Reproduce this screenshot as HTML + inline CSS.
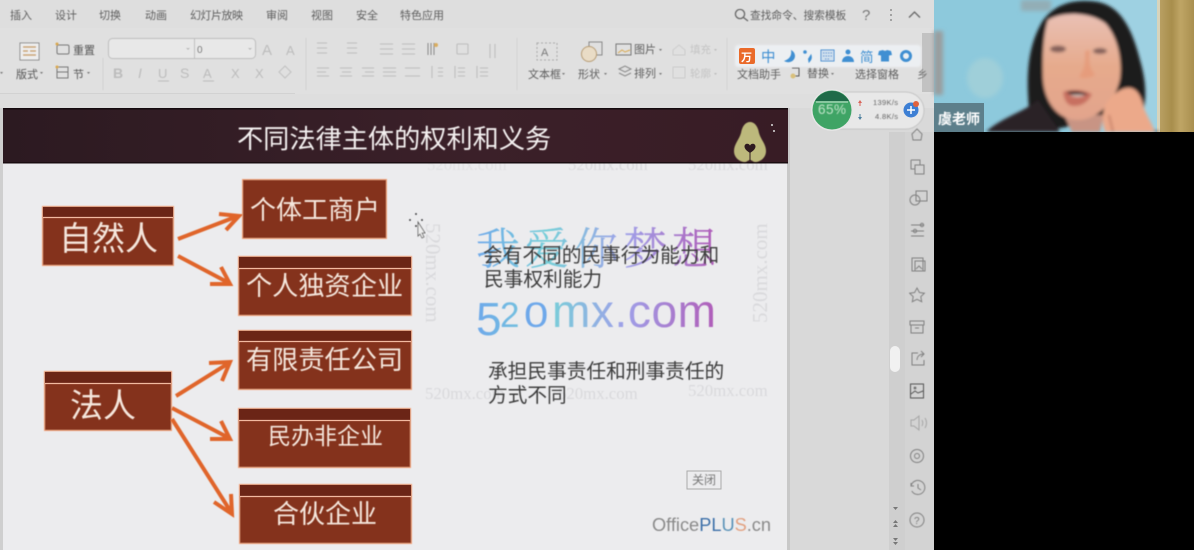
<!DOCTYPE html>
<html lang="zh"><head><meta charset="utf-8"><title>不同法律主体的权利和义务</title>
<style>
html,body{margin:0;padding:0;background:#000;width:1194px;height:550px;overflow:hidden}
svg{display:block}
text{font-family:"Liberation Sans","Noto Sans CJK SC",sans-serif}
.sf{font-family:"Liberation Serif",serif}
</style></head><body>
<svg width="1194" height="550" viewBox="0 0 1194 550" xmlns="http://www.w3.org/2000/svg">
<defs>
<filter id="b3" x="-5%" y="-5%" width="110%" height="110%"><feGaussianBlur stdDeviation="0.45"/></filter>
<filter id="b6" x="-5%" y="-5%" width="110%" height="110%"><feGaussianBlur stdDeviation="0.6"/></filter>
<filter id="b20" x="-20%" y="-20%" width="140%" height="140%"><feGaussianBlur stdDeviation="2"/></filter>
<filter id="b10" x="-20%" y="-20%" width="140%" height="140%"><feGaussianBlur stdDeviation="1"/></filter>
<filter id="b15" x="-10%" y="-10%" width="120%" height="120%"><feGaussianBlur stdDeviation="1.6"/></filter>
<linearGradient id="wm" x1="476" x2="716" y1="0" y2="0" gradientUnits="userSpaceOnUse"><stop offset="0" stop-color="#6ea8ea"/><stop offset=".3" stop-color="#76cfd8"/><stop offset=".62" stop-color="#9fa0e8"/><stop offset="1" stop-color="#b05db8"/></linearGradient>
<linearGradient id="hd" x1="0" x2="1" y1="0" y2="0"><stop offset="0" stop-color="#2c1a21"/><stop offset=".6" stop-color="#3b2029"/><stop offset="1" stop-color="#381c25"/></linearGradient>
<linearGradient id="cur" x1="0" x2="1" y1="0" y2="0"><stop offset="0" stop-color="#b89f62"/><stop offset=".35" stop-color="#a88e4c"/><stop offset=".6" stop-color="#bfa565"/><stop offset="1" stop-color="#a98f4f"/></linearGradient>
<linearGradient id="face" x1="0" x2="0" y1="0" y2="1"><stop offset="0" stop-color="#e9c0b4"/><stop offset=".5" stop-color="#e6aa8c"/><stop offset="1" stop-color="#e2a48c"/></linearGradient>
</defs>

<!-- app background -->
<rect width="1194" height="550" fill="#000"/>
<rect width="934" height="550" fill="#d9d9d9"/>
<rect width="934" height="108" fill="#dedede"/>
<rect y="28" width="934" height="66" fill="#e0e0e0"/>
<rect x="889" y="132" width="16" height="418" fill="#cfcfcf"/>
<rect x="905" y="132" width="29" height="418" fill="#d3d3d3"/>
<rect x="922" y="33" width="12" height="59" fill="#c2c2c2"/>
<rect x="0" y="93" width="295" height="1" fill="#d2d2d2"/>

<!-- tabs -->
<g font-size="11" fill="#5e5e5e" filter="url(#b6)">
<text x="10" y="19">插入</text><text x="55" y="19">设计</text><text x="99" y="19">切换</text><text x="145" y="19">动画</text><text x="190" y="19" textLength="53">幻灯片放映</text><text x="266" y="19">审阅</text><text x="311" y="19">视图</text><text x="356" y="19">安全</text><text x="400" y="19">特色应用</text>
<text x="750" y="19" font-size="10.7">查找命令、搜索模板</text>
<text x="862" y="20" font-size="15" fill="#777">?</text>
</g>
<g fill="none" stroke="#666" stroke-width="1.3" filter="url(#b3)">
<circle cx="740" cy="14" r="4.6"/><path d="M743.5 17.5L748 21"/>
<path d="M909 17.5L914.5 12L920 17.5"/>
</g>
<g fill="#777"><circle cx="891" cy="10" r=".9"/><circle cx="891" cy="15" r=".9"/><circle cx="891" cy="20" r=".9"/></g>

<!-- ribbon left -->
<g filter="url(#b6)">
<rect x="20" y="43" width="19" height="17" fill="#eee" stroke="#8b8b8b"/>
<path d="M23 47h13M23 51h5M30 51h6M23 55h13" stroke="#c9a066" stroke-width="1.5"/>
<rect x="57" y="45" width="12" height="9" rx="1.5" fill="none" stroke="#777"/><circle cx="57" cy="44" r="1.5" fill="#d9a84e"/>
<rect x="57" y="67" width="11" height="11" fill="none" stroke="#777"/><path d="M57 72h11" stroke="#777"/><circle cx="57" cy="67" r="1.5" fill="#d9a84e"/>
<g font-size="11" fill="#555"><text x="73" y="54">重置</text><text x="16" y="78">版式</text><text x="73" y="78">节</text></g>
<g fill="#777"><path d="M40 72l3 0-1.5 2zM87 72l3 0-1.5 2zM0 72l3 0-1.5 2z"/></g>
<rect x="108.500" y="38.500" width="147" height="20" rx="4" fill="#e8e8e8" stroke="#bdbdbd"/>
<path d="M194.500 39v19" stroke="#bdbdbd"/>
<text x="197" y="53" font-size="10" fill="#666">0</text>
<g fill="#b7b7b7"><path d="M186 48l4 0-2 2zM248 48l4 0-2 2z"/></g>
<g font-family="Liberation Sans" fill="#bcbcbc"><text x="262" y="55" font-size="15">A</text><text x="286" y="55" font-size="13">A</text>
<text x="113" y="78" font-size="14" font-weight="bold">B</text><text x="138" y="78" font-size="14" font-style="italic">I</text><text x="158" y="78" font-size="13">U</text><text x="180" y="78" font-size="14">S</text><text x="203" y="78" font-size="13">A</text><text x="231" y="78" font-size="13">X</text><text x="255" y="78" font-size="13">X</text></g>
<path d="M158 81h11M203 81h11" stroke="#bbb"/>
<path d="M279 72l6-6 6 6-6 6z" fill="none" stroke="#c0c0c0"/>
<path d="M103 58v32M306 38v52" stroke="#d0d0d0"/>
<g stroke="#bdbdbd" stroke-width="1.1" fill="none">
<path d="M317 43h10M317 48h10M317 53h10M347 43h10M347 48h10M347 53h10M380 44h13M380 49h13M380 54h13M402 44h13M402 49h13M402 54h13M457 44h11M457 54h11M457 44v10M468 44v10M490 44v14M495 44v14"/>
<path d="M317 68h12M317 72h9M317 76h12M340 68h12M342 72h9M340 76h12M362 68h12M365 72h9M362 76h12M383 68h13M383 72h13M383 76h13M405 68h15M405 76h15M432 66v12M438 68h5M438 72h5M438 76h5M455 66v12M458 68h7M458 72h7M458 76h7M477 66v12M480 68h8M480 72h8M480 76h8"/>
</g>
<path d="M428 43v12M431 43v12M434 43v12" stroke="#888" fill="none"/><circle cx="436" cy="45" r="2" fill="#d9ad60"/>
</g>

<!-- ribbon right -->
<g filter="url(#b6)">
<path d="M517 38v52M727 38v52" stroke="#d2d2d2"/>
<rect x="537" y="43" width="20" height="17" fill="none" stroke="#aaa" stroke-dasharray="2 2"/>
<text x="541" y="56" font-family="Liberation Sans" font-size="11" fill="#777">A</text>
<rect x="589" y="42" width="13" height="13" fill="none" stroke="#888"/><circle cx="589" cy="54" r="7.500" fill="#e9dcc6" stroke="#b69a6e"/>
<rect x="616" y="44" width="15" height="11" fill="none" stroke="#777"/><path d="M618 53l4-3 3 2 5-2" stroke="#d9a84e" fill="none"/>
<g fill="none" stroke="#888"><path d="M619 69l6-3 6 3-6 3zM619 73l6 3 6-3"/></g>
<g fill="none" stroke="#ccc"><path d="M673 50l6-5 6 5v5h-12z"/><rect x="673" y="67" width="12" height="11"/></g>
<g font-size="11" fill="#5f5f5f"><text x="528" y="78">文本框</text><text x="578" y="78">形状</text><text x="634" y="53">图片</text><text x="634" y="77">排列</text><text x="737" y="78">文档助手</text><text x="807" y="77">替换</text><text x="855" y="78">选择窗格</text></g>
<g font-size="10.500" fill="#c4c4c4"><text x="690" y="53">填充</text><text x="690" y="77">轮廓</text></g>
<g fill="#777"><path d="M562 73l3 0-1.500 2zM604 73l3 0-1.500 2zM659 49l3 0-1.500 2zM659 73l3 0-1.500 2zM831 73l3 0-1.500 2z"/></g>
<g fill="#bbb"><path d="M714 49l3 0-1.500 2zM714 73l3 0-1.500 2z"/></g>
<path d="M792 68h7v8h-4" fill="none" stroke="#555"/><circle cx="793" cy="76" r="2.500" fill="#d9c07a"/>
<text x="917" y="78" font-size="11" fill="#777">乡</text>
</g>

<!-- slide -->
<rect x="0" y="108" width="3" height="442" fill="#cfcfcf"/>
<rect x="3" y="163" width="784" height="387" fill="#ececee"/>
<rect x="787" y="108" width="3" height="442" fill="#c8c8c8"/>

<!-- watermarks (under header) -->
<g font-size="16.800" fill="#d9d9dc" filter="url(#b6)">
<text class="sf" x="427" y="170" fill="#e1e1e3">520mx.com</text>
<text class="sf" x="568" y="170">520mx.com</text>
<text class="sf" x="688" y="170">520mx.com</text>
<text class="sf" x="425" y="399">520mx.com</text>
<text class="sf" x="558" y="399">520mx.com</text>
<text class="sf" x="688" y="396">520mx.com</text>
<text class="sf" transform="translate(426,223) rotate(90)" font-size="21">520mx.com</text>
<text class="sf" transform="translate(767,323) rotate(-90)" font-size="21">520mx.com</text>
</g>

<rect x="3" y="108" width="785" height="55" fill="url(#hd)"/>
<rect x="3" y="108" width="785" height="1.500" fill="#140a0e"/>
<rect x="3" y="162" width="785" height="1.500" fill="#1a0d11"/>
<text x="237" y="148" font-size="26.200" fill="#f3efef" filter="url(#b3)">不同法律主体的权利和义务</text>
<!-- avocado -->
<path d="M750 122c5 0 8 5 9 11 2 7 7 11 7 18 0 7-6 11-11 11-2 0-3-2-5-2s-3 2-5 2c-5 0-11-4-11-11 0-7 5-11 7-18 1-6 4-11 9-11z" fill="#bdb97c" filter="url(#b3)"/>
<path d="M750 153c-3-2-5.500-4-5.500-6.500 0-1.800 1.300-2.800 2.800-2.800 1.300 0 2.200.8 2.700 1.800.5-1 1.400-1.800 2.700-1.800 1.500 0 2.800 1 2.800 2.800 0 2.500-2.500 4.500-5.500 6.500z" fill="#2e1a20"/>
<path d="M750 152v9" stroke="#2e1a20"/>
<g fill="#ddd"><circle cx="772" cy="125" r="1"/><circle cx="774" cy="131" r="1"/></g>

<!-- boxes -->
<g fill="#84301b" stroke="#f1a077" stroke-width="1" filter="url(#b3)">
<rect x="42.500" y="206.500" width="131" height="59"/>
<rect x="242.500" y="179.500" width="144" height="59"/>
<rect x="238.500" y="256.500" width="173" height="59"/>
<rect x="238.500" y="330.500" width="173" height="59"/>
<rect x="44.500" y="371.500" width="127" height="59"/>
<rect x="238.500" y="408.500" width="172" height="59"/>
<rect x="239.500" y="484.500" width="172" height="59"/>
</g>
<g fill="#6b2516">
<rect x="43" y="207" width="130" height="10"/><rect x="239" y="257" width="172" height="11"/><rect x="239" y="331" width="172" height="10"/><rect x="45" y="372" width="126" height="11"/><rect x="239" y="409" width="171" height="11"/><rect x="240" y="485" width="171" height="11"/>
</g>
<g stroke="#f2b9a0" stroke-width="1.300">
<path d="M43 217.500h130M239 268.500h172M239 341.500h172M45 383.500h126M239 420.500h171M240 496.500h171"/>
</g>
<g fill="#f5e6dc" filter="url(#b3)">
<text x="59" y="250" font-size="33">自然人</text>
<text x="250" y="219" font-size="26">个体工商户</text>
<text x="246" y="295" font-size="26.200">个人独资企业</text>
<text x="246" y="369" font-size="26.200">有限责任公司</text>
<text x="70" y="417" font-size="33">法人</text>
<text x="268" y="444" font-size="23">民办非企业</text>
<text x="273" y="523" font-size="26">合伙企业</text>
</g>

<!-- arrows -->
<g stroke="#e0652a" stroke-width="4" fill="none" stroke-linejoin="miter" filter="url(#b3)">
<path d="M178 239L238 216M219 214L239 216L226 230"/>
<path d="M178 256L229 283M221 267L230 284L210 284"/>
<path d="M176 396L229 363M209 363L230 362L222 381"/>
<path d="M172 408L229 438M221 421L230 439L210 439"/>
<path d="M172 419L231 512M214 502L232 514L231 494"/>
</g>

<!-- cursor -->
<g filter="url(#b3)"><path d="M418 222l7 11-3 0 2 4-2 1-2-4-2 2z" fill="#eee" stroke="#555" stroke-width=".8"/>
<g fill="#222"><circle cx="416" cy="214" r=".9"/><circle cx="416" cy="226" r=".9"/><circle cx="410" cy="220" r=".9"/><circle cx="422" cy="220" r=".9"/></g></g>

<!-- coloured watermark -->
<g fill="url(#wm)" filter="url(#b3)">
<text x="476" y="264" font-size="44" letter-spacing="5" stroke="url(#wm)" stroke-width=".5" style="font-family:'Noto Serif CJK SC',serif;font-weight:200">我爱你梦想</text>
<text x="476" y="335" font-size="46">5</text>
<text x="500" y="327" font-size="35">2</text>
<text transform="translate(524,327) scale(1.25,1)" font-size="35">0</text>
<text x="552" y="327" font-size="46" textLength="164">mx.com</text>
</g>

<!-- body text -->
<g font-size="19.700" fill="#3c3c3c" filter="url(#b3)">
<text x="483" y="262">会有不同的民事行为能力和</text>
<text x="484" y="286">民事权利能力</text>
<text x="488" y="378">承担民事责任和刑事责任的</text>
<text x="488" y="402">方式不同</text>
</g>

<!-- close / logo -->
<rect x="687" y="471" width="34" height="18" fill="#ececee" stroke="#aaa"/>
<text x="692" y="484" font-size="12" fill="#777" filter="url(#b3)">关闭</text>
<text x="652" y="531" font-size="18.200" fill="#8a8a8a" filter="url(#b3)">Office<tspan fill="#3a6ea8">PL</tspan><tspan fill="#5a93b8">U</tspan><tspan fill="#e2a080">S</tspan><tspan>.cn</tspan></text>

<!-- right sidebar -->
<rect x="890" y="346" width="10" height="26" rx="5" fill="#f1f1f1"/>
<g fill="#777"><path d="M893 507h5l-2.500 3zM893 523h5l-2.500-3zM893 527h5l-2.500-3zM893 538h5l-2.500 3zM893 542h5l-2.500 3z"/></g>
<g fill="none" stroke="#808080" stroke-width="1" filter="url(#b6)">
<path d="M912 134l5-5 5 5-1 6h-8z"/>
<path d="M911 160h9v5M915 165h9v9h-9zM911 160v9h4"/>
<rect x="916" y="191" width="11" height="10"/><circle cx="915" cy="200" r="5"/>
<path d="M911 225h13M911 231h13M911 236h13"/><circle cx="922" cy="225" r="1.700"/><circle cx="915" cy="231" r="1.700"/>
<rect x="912" y="258" width="11" height="13"/><rect x="915" y="261" width="10" height="10"/><path d="M916 269l3-3 3 3"/>
<path d="M917 288l2.400 4.500 5 .7-3.600 3.500.9 5-4.700-2.400-4.700 2.400.9-5-3.600-3.500 5-.7z"/>
<path d="M910 321h14v4h-14zM911 325v8h12v-8M915 328h4"/>
<path d="M924 360v5h-12v-12h6M917 360c0-4 3-6 7-6M921 351l3 3-3 3"/>
<rect x="910.500" y="384" width="13" height="14" stroke="#555"/><path d="M911 394l4-3 3 2 5-2" stroke="#555"/><circle cx="915" cy="388" r="1" fill="#444"/>
<path d="M911 420h3l5-4v14l-5-4h-3zM922 420c1 2 1 4 0 6M925 418c2 3 2 7 0 10" stroke="#a5a5a5"/>
<circle cx="917" cy="456" r="6.500"/><circle cx="917" cy="456" r="2.500"/>
<path d="M911 486a7 7 0 1 1 .8 5M911 483v3h3M918 484v4l3 2"/>
<circle cx="917" cy="520" r="7"/>
</g>
<text x="914" y="524" font-size="10" fill="#777" filter="url(#b3)">?</text>

<!-- IME bar -->
<rect x="735" y="45" width="186" height="22" rx="3" fill="#eef1f4" opacity=".92" filter="url(#b10)"/>
<rect x="739" y="48" width="16" height="16" rx="2" fill="#ea6a2a"/>
<text x="741" y="61" font-size="11" fill="#fff" font-weight="bold">万</text>
<g filter="url(#b3)">
<text x="761" y="62" font-size="14.500" fill="#3f8fd2">中</text>
<path d="M791 50c1 5-1 9-7 11 5 3 11 0 11-5 0-3-2-5-4-6z" fill="#3f8fd2"/>
<circle cx="805" cy="52" r="1.800" fill="#3f8fd2"/><path d="M811 55c1 3 0 5-2 7l-.5-3z" fill="#3f8fd2" stroke="#3f8fd2"/>
<rect x="821" y="50" width="13" height="11" fill="#cfe0ee" stroke="#3f8fd2"/><path d="M823 53h9M823 56h9M825 59h5" stroke="#3f8fd2" stroke-dasharray="1.500 1"/>
<circle cx="848" cy="52" r="2.500" fill="#3f8fd2"/><path d="M842 62c0-4 3-6 6-6s6 2 6 6z" fill="#3f8fd2"/>
<text x="860" y="62" font-size="13.500" fill="#3f8fd2">简</text>
<path d="M879 51l4-1c1 1 3 1 4 0l4 1 1 4-3 .5v6h-8v-6l-3-.5z" fill="#3f8fd2"/>
<circle cx="906" cy="56" r="4.500" fill="none" stroke="#3f8fd2" stroke-width="3"/>
</g>

<!-- speed widget -->
<rect x="820" y="92" width="104" height="37" rx="18.500" fill="#e8e8e8" stroke="#c4c4c4" filter="url(#b3)"/>
<circle cx="832" cy="110" r="21" fill="#e6e6e6"/>
<circle cx="832" cy="110" r="19.500" fill="#3fa465"/>
<path d="M815 101a19.500 19.500 0 0 1 34 0z" fill="#1f6b48"/>
<path d="M816 102h32" stroke="#cfe7d6"/>
<text x="818" y="114" font-size="13.500" fill="#bfe3c8" textLength="28" filter="url(#b3)">65%</text>
<g filter="url(#b3)" font-size="7.500" fill="#666">
<text x="873" y="105" textLength="25">139K/s</text><text x="875" y="119" textLength="23">4.8K/s</text>
</g>
<path d="M860 100l-2 3h1.500v3h1v-3h1.500z" fill="#d9655a"/>
<path d="M860 120l-2-3h1.500v-3h1v3h1.500z" fill="#4d7f9e"/>
<circle cx="911" cy="110" r="7.500" fill="#3d7fd4"/><path d="M907 110h8M911 106v8" stroke="#fff" stroke-width="1.500"/>
<circle cx="916" cy="104" r="3" fill="#e2623c"/>

<!-- video -->
<g>
<rect x="934" y="0" width="260" height="132" fill="#8dc9dc"/>
<rect x="1100" y="0" width="60" height="132" fill="#9ed1e2"/>
<rect x="1157" y="0" width="3" height="132" fill="#d8d4bb"/>
<rect x="1160" y="0" width="34" height="132" fill="url(#cur)"/>
<g filter="url(#b20)">
<rect x="934" y="31" width="9" height="64" fill="#9a9d9e"/>
<rect x="1021" y="0" width="30" height="11" fill="#93aeb6"/>
<ellipse cx="985" cy="78" rx="18" ry="20" fill="#9fcfd9"/>
</g>
<g filter="url(#b15)">
<path d="M1030 120C1026 80 1026 50 1042 22 1054 4 1074-2 1098 2 1120 6 1132 28 1140 60 1147 84 1146 100 1143 112L1040 132z" fill="#1f1a1e"/>
<path d="M986 132C1000 118 1024 112 1038 100L1060 132z" fill="#2a2226"/>
<path d="M1140 124l20 8h-30z" fill="#2a1c20"/>
<path d="M1064 115l8 17h28l4-17z" fill="#c89484"/>
<path d="M1048 20C1062 11 1092 12 1106 24 1118 38 1122 60 1120 78 1116 102 1096 121 1076 120 1056 119 1044 100 1043 78 1042 54 1044 32 1048 20z" fill="url(#face)"/>
<path d="M1090 50c-2 12 0 18 5 25-4 3-12 4-16 2 5-7 7-15 6-26z" fill="#e69c7c"/>
<ellipse cx="1058" cy="49" rx="8" ry="3.500" fill="#85605a"/>
<ellipse cx="1100" cy="51" rx="7" ry="3" fill="#85605a"/>
<path d="M1063 92c8-3 20-3 29 2-3 6-8 12-18 12-7 0-10-6-11-14z" fill="#c87060"/>
<path d="M1066 92c7-2 15-1 22 2-6 3-16 3-22-2z" fill="#4a2a2a"/>
<path d="M1070 95c6 0 11 0 15 0-4 2-11 2-15 0z" fill="#f1e2d8"/>
<path d="M1105 132c-4-10-2-24 2-30 6-8 16-16 24-14 8 2 11 12 13 20 3 8 8 16 11 24z" fill="#eca98a"/>
<path d="M1109 115l4 17" stroke="#b8705a" stroke-width="1.500"/>
</g>
<rect x="934" y="103" width="50" height="29" fill="#5d7f8b"/>
<text x="938" y="124" font-size="14" font-weight="bold" fill="#fff" filter="url(#b3)">虞老师</text>
</g>
<rect x="934" y="132" width="260" height="418" fill="#000"/>
</svg>
</body></html>
